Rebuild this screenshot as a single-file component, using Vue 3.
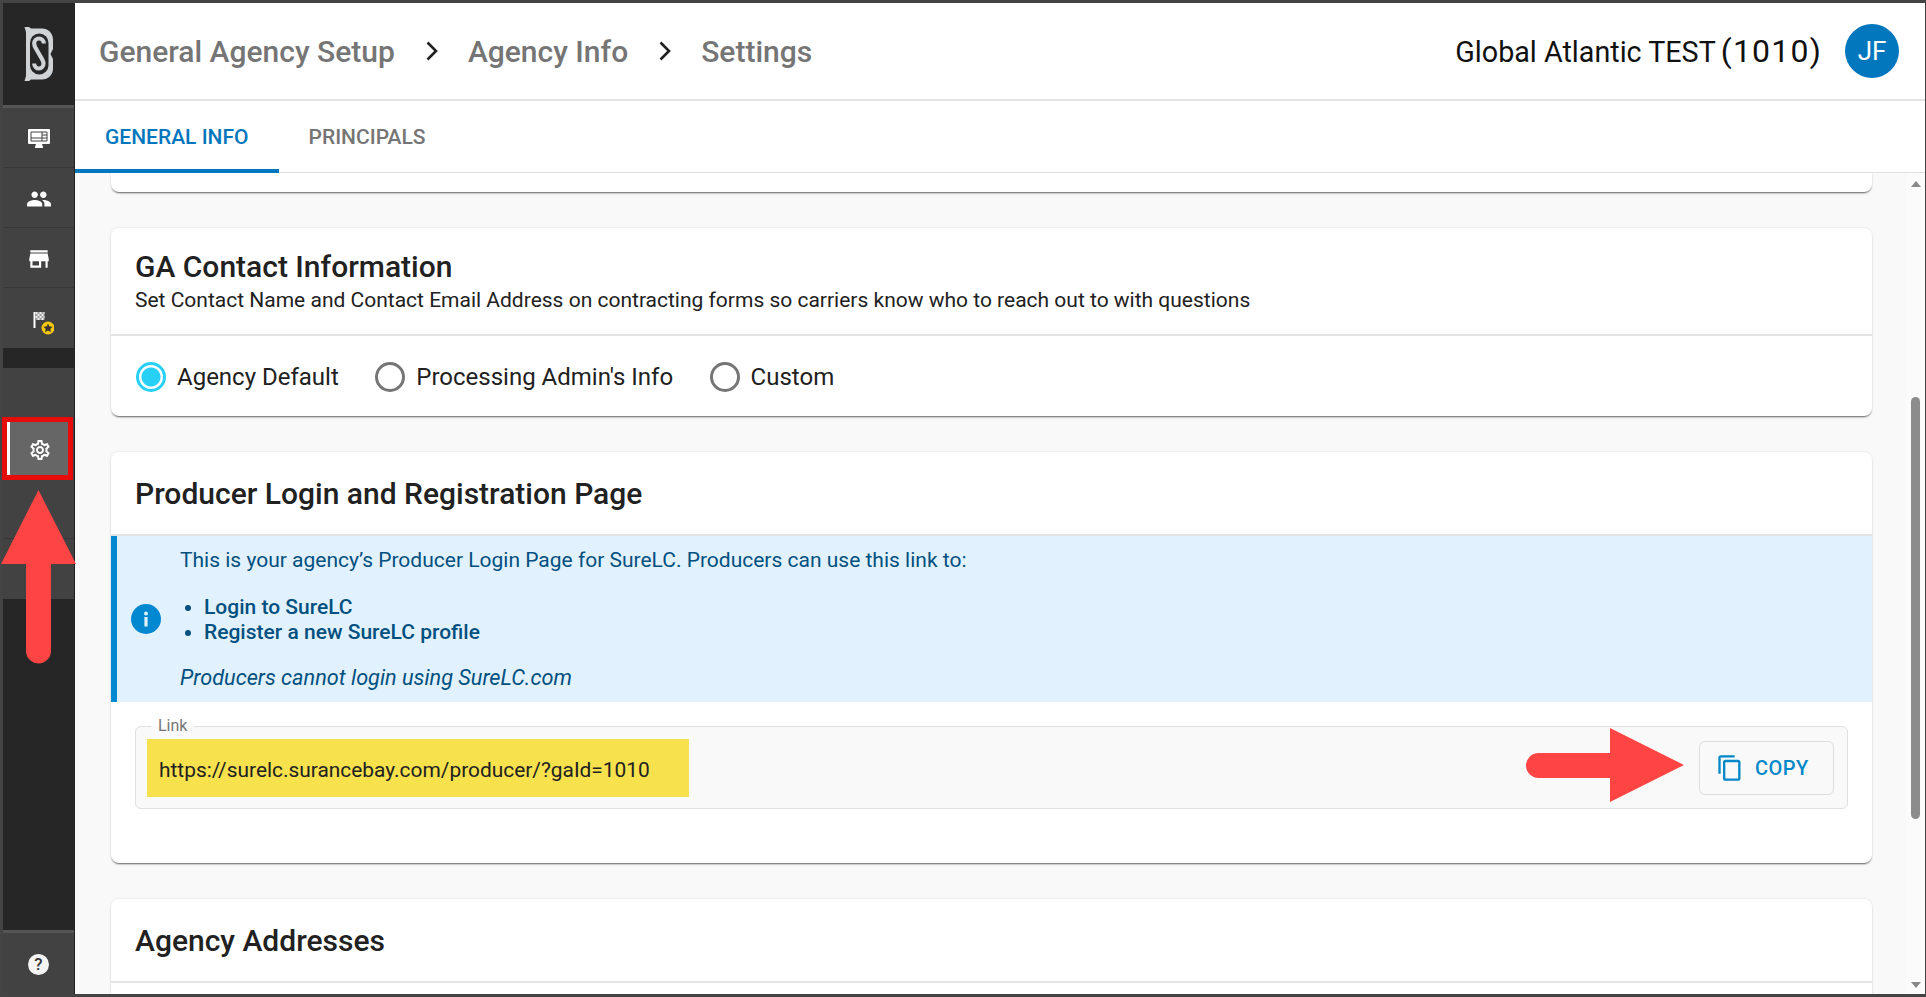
<script setup>
const crumbs = ["General Agency Setup", "Agency Info", "Settings"];

const radios = [
  { label: "Agency Default", on: true },
  { label: "Processing Admin's Info", on: false },
  { label: "Custom", on: false },
];
</script>

<template>
  <div class="frame">
    <aside class="side">
      <div class="logo">
        <svg width="32" height="56" viewBox="0 0 32 56">
          <path d="M1.500 1h4.500l2 1.500h11c6 0 11 4.500 11 11V23l-2.500 5 2.500 5v9.500c0 6.500-5 11-11 11H8L6 55H1.500l1.500-5V6z" fill="#cfd3d6" />
          <rect x="7" y="7.500" width="18.500" height="41" rx="9.250" fill="#262626" />
          <path d="M20.800 17.500c0-3-2.200-5-4.800-5s-4.800 2-4.800 5c0 2 .8 3.500 2 5.500l5.500 9.500c1 1.800 1.800 3 1.800 5 0 3-2.200 5-4.500 5s-4.800-2-4.800-5" fill="none" stroke="#cfd3d6" stroke-width="4.200" />
        </svg>
      </div>
      <div class="group">
        <div class="item">
          <svg width="24" height="24" viewBox="0 0 24 24">
            <path d="M2 2h20a1 1 0 0 1 1 1v13a1 1 0 0 1-1 1h-7l1 3v1H8v-1l1-3H2a1 1 0 0 1-1-1V3a1 1 0 0 1 1-1z" fill="#fff" />
            <path d="M4 5h16v9H4zM4 11h16M15 5v9M15 8h5" fill="none" stroke="#444" stroke-width="1" />
          </svg>
        </div>
        <div class="item">
          <svg width="26" height="26" viewBox="0 0 24 24" fill="#fff">
            <path d="M16 11c1.66 0 2.99-1.34 2.99-3S17.66 5 16 5c-1.66 0-3 1.34-3 3s1.34 3 3 3zm-8 0c1.66 0 2.99-1.34 2.99-3S9.66 5 8 5C6.34 5 5 6.34 5 8s1.34 3 3 3zm0 2c-2.33 0-7 1.17-7 3.500V19h14v-2.500c0-2.330-4.670-3.500-7-3.500zm8 0c-.29 0-.62.02-.97.05 1.16.84 1.97 1.97 1.97 3.450V19h6v-2.500c0-2.330-4.670-3.500-7-3.500z" />
          </svg>
        </div>
        <div class="item">
          <svg width="26" height="26" viewBox="0 0 24 24" fill="#fff">
            <path d="M20 4H4v2h16V4zm1 10v-2l-1-5H4l-1 5v2h1v6h10v-6h4v6h2v-6h1zm-9 4H6v-4h6v4z" />
          </svg>
        </div>
        <div class="item last">
          <svg width="30" height="32" viewBox="-6 -6 30 32">
            <rect x="3.500" y="3" width="2" height="16" fill="#fff" />
            <path d="M5.500 3h9v8h-9z" fill="#9a9a9a" />
            <path d="M5.500 3h2v2h-2zm4 0h2v2h-2zm4 0h1v2h-1zM7.500 5h2v2h-2zm4 0h2v2h-2zM5.500 7h2v2h-2zm4 0h2v2h-2zm4 0h1v2h-1zM7.500 9h2v2h-2zm4 0h2v2h-2z" fill="#eee" />
            <circle cx="18" cy="19" r="6.500" fill="#f5c90f" />
            <path d="M18 14.500l1.400 2.900 3.200.4-2.300 2.200.6 3.200-2.900-1.600-2.900 1.600.6-3.200-2.300-2.200 3.200-.4z" fill="#333" />
          </svg>
        </div>
      </div>
      <div class="band"></div>
      <div class="group second">
        <div class="item active">
          <svg width="24" height="24" viewBox="0 0 24 24" fill="#fff">
            <path d="M19.43 12.98c.04-.32.07-.64.07-.98 0-.34-.03-.66-.07-.98l2.110-1.650c.19-.15.24-.42.12-.64l-2-3.460c-.09-.16-.26-.25-.44-.25-.06 0-.12.01-.17.03l-2.490 1c-.52-.4-1.080-.73-1.690-.98l-.38-2.650C14.46 2.180 14.25 2 14 2h-4c-.25 0-.46.18-.49.42l-.38 2.650c-.61.25-1.170.59-1.690.98l-2.490-1c-.06-.02-.12-.03-.18-.03-.17 0-.34.09-.43.25l-2 3.460c-.13.22-.07.49.12.64l2.110 1.650c-.04.32-.07.65-.07.98 0 .33.03.66.07.98l-2.110 1.650c-.19.15-.24.42-.12.64l2 3.460c.09.16.26.25.44.25.06 0 .12-.01.17-.03l2.490-1c.52.4 1.080.73 1.690.98l.38 2.650c.03.24.24.42.49.42h4c.25 0 .46-.18.49-.42l.38-2.650c.61-.25 1.170-.59 1.690-.98l2.490 1c.06.02.12.03.18.03.17 0 .34-.09.43-.25l2-3.460c.12-.22.07-.49-.12-.64l-2.110-1.650zm-1.980-1.710c.04.31.05.52.05.73 0 .21-.02.43-.05.73l-.14 1.130.89.7 1.080.84-.7 1.210-1.270-.51-1.040-.42-.9.68c-.43.32-.84.56-1.250.73l-1.060.43-.16 1.130-.2 1.350h-1.400l-.19-1.350-.16-1.130-1.060-.43c-.43-.18-.83-.41-1.230-.71l-.91-.7-1.060.43-1.270.51-.7-1.210 1.080-.84.89-.7-.14-1.130c-.03-.31-.05-.54-.05-.74s.02-.43.05-.73l.14-1.130-.89-.7-1.080-.84.7-1.210 1.270.51 1.040.42.9-.68c.43-.32.84-.56 1.250-.73l1.060-.43.16-1.130.2-1.350h1.390l.19 1.350.16 1.130 1.060.43c.43.18.83.41 1.230.71l.91.7 1.060-.43 1.270-.51.7 1.210-1.070.85-.89.7.14 1.130zM12 8c-2.210 0-4 1.790-4 4s1.790 4 4 4 4-1.790 4-4-1.790-4-4-4zm0 6c-1.100 0-2-.9-2-2s.9-2 2-2 2 .9 2 2-.9 2-2 2z" />
          </svg>
        </div>
        <div class="item"></div>
        <div class="item last"></div>
      </div>
      <div class="fill"></div>
      <div class="item help-row"><span class="help">?</span></div>
    </aside>

    <div class="main">
      <header class="top">
        <nav class="crumbs">
          <template v-for="(c, i) in crumbs" :key="c">
            <svg v-if="i > 0" class="chev" width="24" height="24" viewBox="0 0 24 24">
              <path d="M7.500 3.500l8.500 8.500-8.500 8.500" fill="none" stroke="#212121" stroke-width="2.600" />
            </svg>
            <span>{{ c }}</span>
          </template>
        </nav>
        <div class="org">Global Atlantic TEST<span class="code">(1010)</span></div>
        <div class="avatar">JF</div>
      </header>

      <div class="tabs">
        <div class="tab on">GENERAL INFO</div>
        <div class="tab">PRINCIPALS</div>
      </div>

      <div class="body">
        <div class="content">
          <section class="card stub"></section>

          <section class="card">
            <div class="head contact">
              <h2>GA Contact Information</h2>
              <p>Set Contact Name and Contact Email Address on contracting forms so carriers know who to reach out to with questions</p>
            </div>
            <div class="radios">
              <label v-for="r in radios" :key="r.label" class="radio">
                <span class="dot" :class="{ on: r.on }"></span>
                {{ r.label }}
              </label>
            </div>
          </section>

          <section class="card login">
            <div class="head plain">
              <h2>Producer Login and Registration Page</h2>
            </div>
            <div class="info">
              <div class="info-icon">
                <svg width="30" height="30" viewBox="0 0 30 30">
                  <circle cx="15" cy="15" r="15" fill="#0288d1" />
                  <circle cx="15" cy="9.500" r="2" fill="#dff1fd" />
                  <rect x="13.400" y="13" width="3.200" height="9.500" fill="#dff1fd" />
                </svg>
              </div>
              <div class="info-text">
                <p>This is your agency’s Producer Login Page for SureLC. Producers can use this link to:</p>
                <ul>
                  <li>Login to SureLC</li>
                  <li>Register a new SureLC profile</li>
                </ul>
                <p class="note">Producers cannot login using SureLC.com</p>
              </div>
            </div>
            <fieldset class="link">
              <legend>Link</legend>
              <div class="url">https://surelc.surancebay.com/producer/?gaId=1010</div>
              <button class="copy">
                <svg width="28" height="28" viewBox="0 0 24 24" fill="#0288c8">
                  <path d="M16 1H4c-1.100 0-2 .9-2 2v14h2V3h12V1zm3 4H8c-1.100 0-2 .9-2 2v14c0 1.100.9 2 2 2h11c1.100 0 2-.9 2-2V7c0-1.100-.9-2-2-2zm0 16H8V7h11v14z" />
                </svg>
                COPY
              </button>
            </fieldset>
          </section>

          <section class="card last-card">
            <div class="head plain">
              <h2>Agency Addresses</h2>
            </div>
          </section>
        </div>

        <div class="scroll">
          <span class="up"></span>
          <div class="track"><div class="thumb"></div></div>
          <span class="down"></span>
        </div>
      </div>
    </div>

    <!-- annotations on top of the screenshot -->
    <div class="red-box"></div>
    <svg class="arrow-up" width="76" height="174" viewBox="0 0 76 174">
      <path d="M37.500 0L75 74H50v87a12.500 12.500 0 0 1-25 0V74H0z" fill="#ff4444" />
    </svg>
    <svg class="arrow-right" width="158" height="74" viewBox="0 0 158 74">
      <path d="M158 37L84 0v25H12.500a12.500 12.500 0 0 0 0 25H84v24z" fill="#ff4444" />
    </svg>
  </div>
</template>

<style scoped>
.frame {
  position: relative;
  display: flex;
  width: 1926px;
  height: 997px;
  box-sizing: border-box;
  padding: 3px 1px 3px 3px;
  background-color: #444;
  overflow: hidden;
  font-family: Roboto, "Liberation Sans", sans-serif;
  color: #212121;
}
.side {
  width: 71px;
  flex: none;
  display: flex;
  flex-direction: column;
  background-color: #262626;
  border-right: 1px solid #222;
}
.logo {
  height: 102px;
  flex: none;
  display: flex;
  align-items: center;
  justify-content: center;
  border-bottom: 3px solid #555;
}
.group {
  background-color: #424242;
}
.second {
  padding-top: 51px;
}
.item {
  height: 57px;
  padding-top: 2px;
  border-bottom: 1px solid #383838;
  display: flex;
  align-items: center;
  justify-content: center;
}
.item.last {
  border-bottom: none;
  height: 58px;
}
.item.active {
  background-color: #666;
  border-left: 3px solid #fff;
  margin-left: 4px;
  margin-right: 4px;
}
.band {
  height: 20px;
  flex: none;
}
.fill {
  flex: 1;
}
.help-row {
  height: 59px;
  flex: none;
  background-color: #424242;
  border-top: 3px solid #555;
  border-bottom: none;
}
.help {
  width: 21px;
  height: 21px;
  border-radius: 50%;
  background-color: #f5f5f5;
  color: #333;
  font-size: 17px;
  font-weight: 500;
  line-height: 21px;
  text-align: center;
}

.main {
  flex: 1;
  min-width: 0;
  display: flex;
  flex-direction: column;
  background-color: #f9f9f9;
}
.top {
  height: 96px;
  flex: none;
  display: flex;
  align-items: center;
  padding: 0 26px 0 24px;
  background-color: #fff;
  border-bottom: 2px solid #e4e4e4;
}
.crumbs {
  flex: 1;
  display: flex;
  align-items: center;
  font-size: 30px;
  font-weight: 500;
  color: #757575;
}
.chev {
  margin: 0 24px 0 25px;
}
.org {
  font-size: 28.700px;
  color: #111;
}
.code {
  margin-left: 5px;
  font-size: 32px;
  letter-spacing: 1.200px;
}
.avatar {
  width: 54px;
  height: 54px;
  margin-left: 23px;
  border-radius: 50%;
  background-color: #0277bd;
  color: #fff;
  font-size: 26px;
  line-height: 54px;
  text-align: center;
}
.tabs {
  height: 72px;
  flex: none;
  display: flex;
  box-sizing: border-box;
  background-color: #fff;
  border-bottom: 1px solid #e0e0e0;
}
.tab {
  padding: 0 30px;
  line-height: 72px;
  font-size: 21px;
  font-weight: 500;
  color: #757575;
}
.tab.on {
  color: #0277bd;
  height: 72px;
  box-sizing: border-box;
  border-bottom: 4px solid #0277bd;
}
.body {
  flex: 1;
  min-height: 0;
  display: flex;
  overflow: hidden;
}
.content {
  flex: 1;
  min-width: 0;
  padding: 0 34px 0 36px;
  overflow: hidden;
}
.card {
  background-color: #fff;
  border-radius: 8px;
  box-shadow: 0 2px 2px -1px rgba(0, 0, 0, 0.6), 0 0 3px rgba(0, 0, 0, 0.1);
  margin-bottom: 36px;
}
.stub {
  height: 19px;
  border-radius: 0 0 8px 8px;
}
.head {
  box-sizing: border-box;
  padding: 0 24px;
  border-bottom: 2px solid #e4e4e4;
}
.head h2 {
  margin: 0;
  font-size: 30px;
  font-weight: 500;
  color: #212121;
}
.contact {
  height: 108px;
  padding-top: 21px;
}
.contact p {
  margin: 4px 0 0;
  font-size: 21px;
  color: #212121;
}
.plain {
  height: 84px;
  padding-top: 24px;
}
.radios {
  height: 80px;
  box-sizing: border-box;
  display: flex;
  align-items: center;
  padding: 2px 24px 0 25px;
  gap: 36.500px;
}
.radio {
  display: flex;
  align-items: center;
  gap: 11px;
  font-size: 24px;
  color: #212121;
}
.dot {
  width: 30px;
  height: 30px;
  box-sizing: border-box;
  border-radius: 50%;
  border: 3px solid #757575;
}
.dot.on {
  border-color: #29d0f6;
  background: radial-gradient(circle, #29d0f6 0 9px, #fff 10px);
}
.login {
  height: 411px;
}
.info {
  height: 166px;
  display: flex;
  box-sizing: border-box;
  background-color: #e1f2fe;
  border-left: 6px solid #0288d1;
  color: #01507f;
}
.info-icon {
  width: 63px;
  flex: none;
  display: flex;
  align-items: center;
  justify-content: center;
  padding-right: 6px;
  box-sizing: border-box;
}
.info-text {
  font-size: 21px;
  line-height: 25px;
  padding-top: 12px;
}
.info-text p {
  margin: 0;
}
.info-text ul {
  margin: 22px 0 20px;
  padding-left: 24px;
  font-weight: 500;
}
.info-text .note {
  font-style: italic;
  font-size: 21.700px;
}
.link {
  height: 90px;
  box-sizing: border-box;
  margin: 17px 24px 0;
  padding: 6px 13px 0 11px;
  display: flex;
  align-items: flex-start;
  justify-content: space-between;
  background-color: #f9f9f9;
  border: 1px solid #e0e0e0;
  border-radius: 6px;
}
.link legend {
  margin-left: 4px;
  padding: 0 7px;
  font-size: 16px;
  line-height: 14px;
  color: #757575;
}
.url {
  width: 542px;
  height: 58px;
  box-sizing: border-box;
  padding-left: 12px;
  background-color: #f7e14d;
  font-size: 20.900px;
  line-height: 62px;
  color: #212121;
}
.copy {
  width: 135px;
  height: 54px;
  margin-top: 2px;
  display: flex;
  align-items: center;
  gap: 11px;
  padding: 0 0 0 16px;
  background-color: #f9f9f9;
  border: 1px solid #ddd;
  border-radius: 6px;
  font-family: inherit;
  font-size: 20px;
  font-weight: 500;
  letter-spacing: 0.5px;
  color: #0288c8;
}
.last-card {
  height: 200px;
}
.scroll {
  width: 19px;
  flex: none;
  display: flex;
  flex-direction: column;
  align-items: center;
  background-color: #fbfbfb;
}
.up,
.down {
  flex: none;
  width: 0;
  height: 0;
  margin: 8px 0 4px;
  border-left: 5px solid transparent;
  border-right: 5px solid transparent;
}
.up {
  border-bottom: 6px solid #888;
}
.down {
  border-top: 6px solid #888;
  margin: 4px 0 6px;
}
.track {
  flex: 1;
  padding-top: 206px;
}
.thumb {
  width: 9px;
  height: 422px;
  border-radius: 5px;
  background-color: #8c8c8c;
}
.red-box {
  position: absolute;
  left: 2px;
  top: 417px;
  width: 71px;
  height: 63px;
  box-sizing: border-box;
  border: 5px solid #e60c0c;
}
.arrow-up {
  position: absolute;
  left: 1px;
  top: 490px;
}
.arrow-right {
  position: absolute;
  left: 1526px;
  top: 728px;
}
</style>
